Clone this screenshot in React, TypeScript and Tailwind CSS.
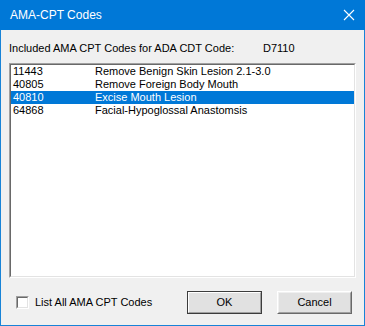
const rows = [
  { code: "11443", desc: "Remove Benign Skin Lesion 2.1-3.0" },
  { code: "40805", desc: "Remove Foreign Body Mouth" },
  { code: "40810", desc: "Excise Mouth Lesion" },
  { code: "64868", desc: "Facial-Hypoglossal Anastomsis" },
];

const selected = "40810";

export default function App() {
  return (
    <div
      className="w-[365px] h-[326px] flex flex-col bg-[#f0f0f0] border border-t-0 border-[#1883d7] text-[11px] leading-[13px] text-black"
      style={{ fontFamily: '"Liberation Sans", Arial, sans-serif' }}
    >
      {/* title bar */}
      <div className="h-[30px] -mx-px bg-[#0078d7] flex items-center justify-between pl-[10px] pr-[9px] text-white">
        <span className="text-[12px]">AMA-CPT Codes</span>
        <svg width="12" height="12" viewBox="0 0 12 12" className="mr-[1px]">
          <path d="M1 1 L11 11 M11 1 L1 11" stroke="white" strokeWidth="1.1" />
        </svg>
      </div>

      <div className="flex flex-col px-[8px]">
        {/* label */}
        <div className="mt-[12px] h-[13px] flex">
          <span className="w-[254px]">Included AMA CPT Codes for ADA CDT Code:</span>
          <span>D7110</span>
        </div>

        {/* listbox */}
        <div className="mt-[8px] h-[215px] border border-t-[#a0a0a0] border-l-[#a0a0a0] border-r-white border-b-white">
          <div className="h-full border border-t-[#696969] border-l-[#696969] border-r-[#e3e3e3] border-b-[#e3e3e3] bg-white">
            {rows.map((r) => (
              <div
                key={r.code}
                className={
                  r.code === selected
                    ? "flex h-[13px] pl-[2px] bg-[#0078d7] text-white"
                    : "flex h-[13px] pl-[2px]"
                }
              >
                <span className="w-[82px]">{r.code}</span>
                <span>{r.desc}</span>
              </div>
            ))}
          </div>
        </div>

        {/* bottom row */}
        <div className="mt-[13px] flex items-center justify-between">
          <label className="flex items-center ml-[7px] gap-[6px]">
            <span className="w-[13px] h-[13px] border border-t-[#a0a0a0] border-l-[#a0a0a0] border-r-white border-b-white">
              <span className="block w-full h-full border border-t-[#696969] border-l-[#696969] border-r-[#e3e3e3] border-b-[#e3e3e3] bg-white" />
            </span>
            <span>List All AMA CPT Codes</span>
          </label>
          <div className="flex gap-[15px] pr-[4px]">
            <button className="w-[75px] h-[23px] border border-[#3c3c3c] bg-[#e1e1e1] p-0">
              <span className="flex w-full h-full items-center justify-center border border-t-white border-l-white border-r-[#a0a0a0] border-b-[#a0a0a0]">
                OK
              </span>
            </button>
            <button className="w-[75px] h-[23px] border border-t-white border-l-white border-r-[#696969] border-b-[#696969] bg-[#e1e1e1] p-0">
              <span className="flex w-full h-full items-center justify-center border border-t-[#f0f0f0] border-l-[#f0f0f0] border-r-[#a0a0a0] border-b-[#a0a0a0]">
                Cancel
              </span>
            </button>
          </div>
        </div>
      </div>
    </div>
  );
}
